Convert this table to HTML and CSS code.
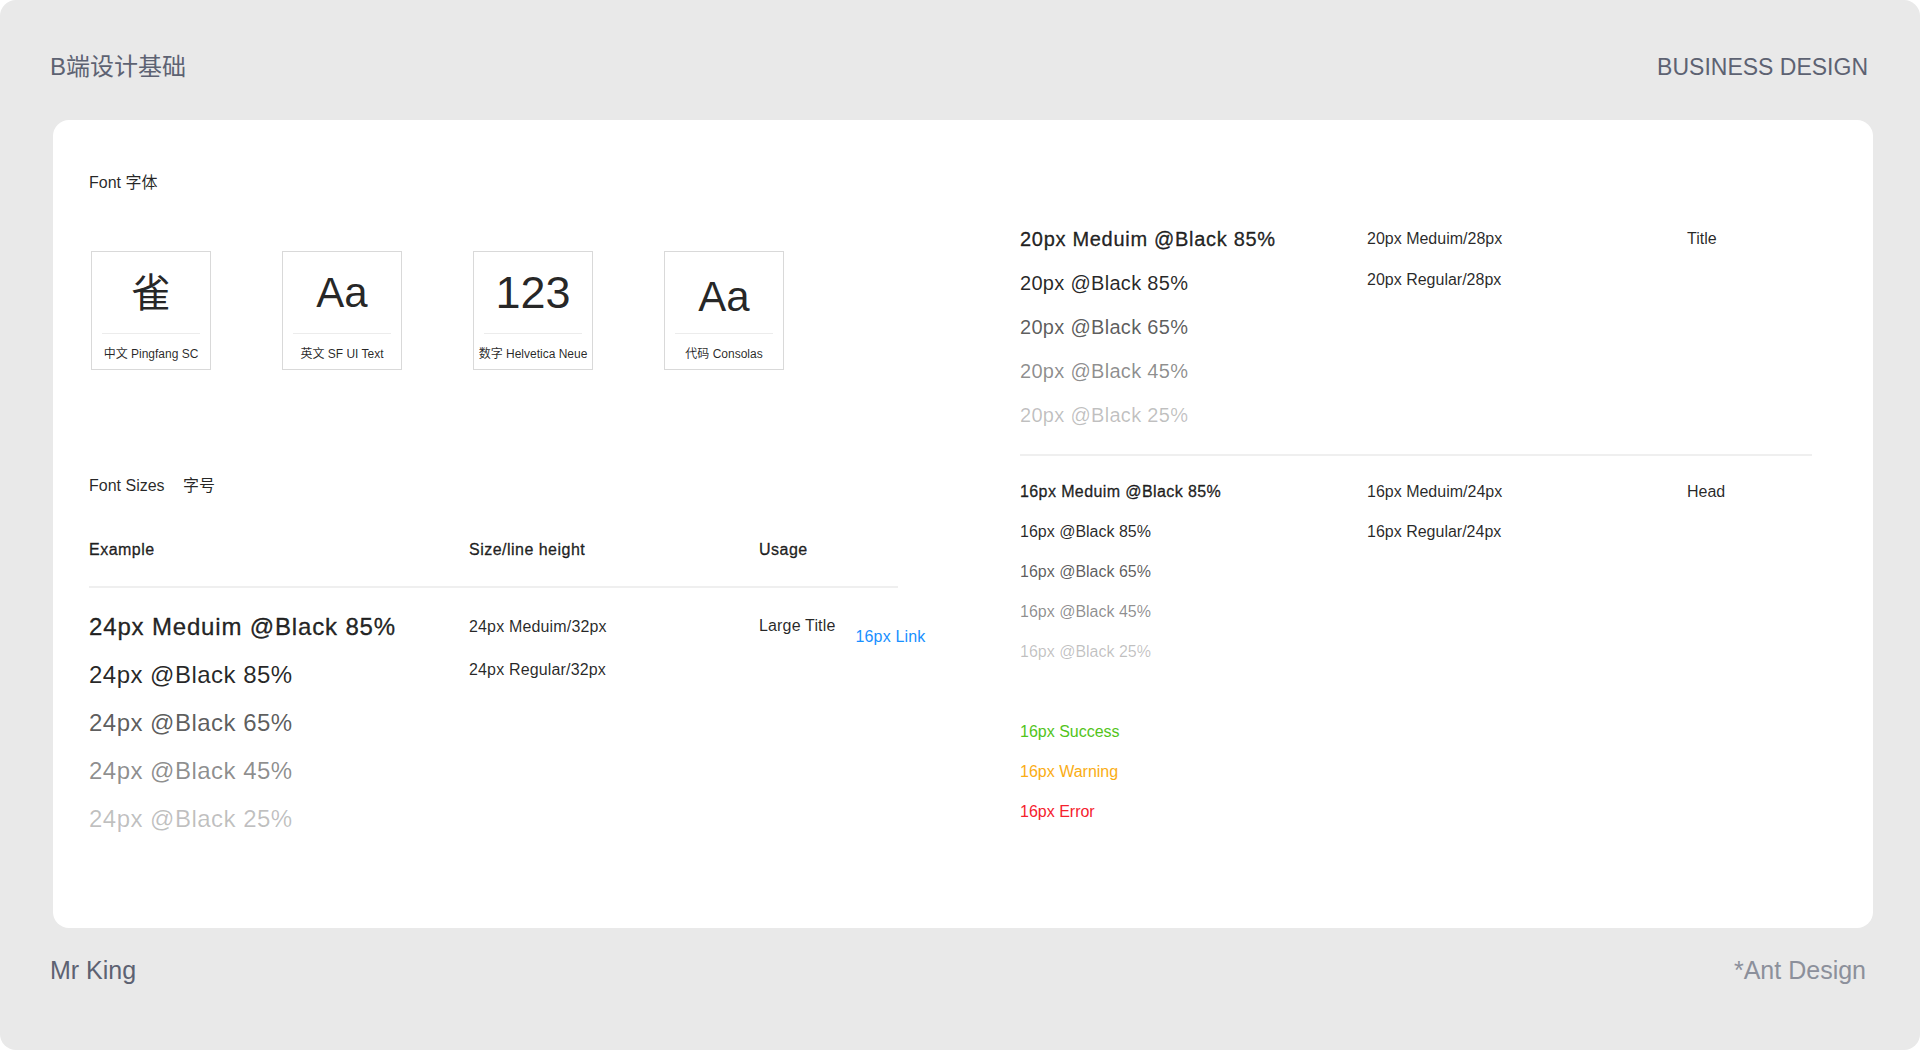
FILE: index.html
```html
<!DOCTYPE html>
<html lang="zh-CN">
<head>
<meta charset="utf-8">
<title>B端设计基础</title>
<link rel="stylesheet" href="styles.css">
</head>
<body>
<div class="frame">
  <header class="top">
    <div class="brand">B端设计基础</div>
    <div class="brand">BUSINESS DESIGN</div>
  </header>

  <main class="card">
    <section class="col-left">
      <h2 class="sec-title">Font 字体</h2>
      <div class="faces">
        <div class="face"><div class="glyph cjk">雀</div><div class="face-label">中文 Pingfang SC</div></div>
        <div class="face"><div class="glyph">Aa</div><div class="face-label">英文 SF UI Text</div></div>
        <div class="face"><div class="glyph num">123</div><div class="face-label">数字 Helvetica Neue</div></div>
        <div class="face"><div class="glyph low">Aa</div><div class="face-label">代码 Consolas</div></div>
      </div>

      <h2 class="sec-title sizes-title">Font Sizes <span class="cn">字号</span></h2>

      <div class="thead">
        <div class="c1 medium">Example</div>
        <div class="c2 medium">Size/line height</div>
        <div class="c3 medium">Usage</div>
      </div>
      <div class="rule wide"></div>

      <div class="rows24">
        <div class="r24">
          <div class="c1 medium k85">24px Meduim @Black 85%</div>
          <div class="c2 small">24px Meduim/32px</div>
          <div class="c3 small usage"><span>Large Title</span><span class="link">16px Link</span></div>
        </div>
        <div class="r24">
          <div class="c1 k85">24px @Black 85%</div>
          <div class="c2 small up">24px Regular/32px</div>
        </div>
        <div class="r24"><div class="c1 k65">24px @Black 65%</div></div>
        <div class="r24"><div class="c1 k45">24px @Black 45%</div></div>
        <div class="r24"><div class="c1 k25">24px @Black 25%</div></div>
      </div>
    </section>

    <section class="col-right">
      <div class="r20">
        <div class="d1 medium k85">20px Meduim @Black 85%</div>
        <div class="d2">20px Meduim/28px</div>
        <div class="d3">Title</div>
      </div>
      <div class="r20">
        <div class="d1 k85">20px @Black 85%</div>
        <div class="d2 up">20px Regular/28px</div>
      </div>
      <div class="r20"><div class="d1 k65">20px @Black 65%</div></div>
      <div class="r20"><div class="d1 k45">20px @Black 45%</div></div>
      <div class="r20"><div class="d1 k25">20px @Black 25%</div></div>

      <div class="rule right-rule"></div>

      <div class="r16">
        <div class="d1 medium k85">16px Meduim @Black 85%</div>
        <div class="d2">16px Meduim/24px</div>
        <div class="d3">Head</div>
      </div>
      <div class="r16">
        <div class="d1 k85">16px @Black 85%</div>
        <div class="d2">16px Regular/24px</div>
      </div>
      <div class="r16"><div class="d1 k65">16px @Black 65%</div></div>
      <div class="r16"><div class="d1 k45">16px @Black 45%</div></div>
      <div class="r16"><div class="d1 k25">16px @Black 25%</div></div>

      <div class="status">
        <div class="r16 success">16px Success</div>
        <div class="r16 warning">16px Warning</div>
        <div class="r16 error">16px Error</div>
      </div>
    </section>
  </main>

  <footer class="bottom">
    <div class="author">Mr King</div>
    <div class="credit">*Ant Design</div>
  </footer>
</div>
</body>
</html>
```

FILE: styles.css
```css
* { box-sizing: border-box; }

html, body {
  margin: 0;
  padding: 0;
  background: #ffffff;
}

body {
  font-family: "Liberation Sans", "Noto Sans CJK SC", sans-serif;
  color: rgba(0, 0, 0, 0.85);
}

.frame {
  width: 1920px;
  height: 1050px;
  background: #e9e9e9;
  border-radius: 16px;
  display: flex;
  flex-direction: column;
}

.top {
  height: 120px;
  padding: 14px 52px 0 50px;
  display: flex;
  align-items: center;
  justify-content: space-between;
}

.brand {
  font-size: 23px;
  color: #5d6272;
  line-height: 28px;
}

.top .brand:first-child { font-size: 24px; }

.card {
  margin: 0 47px 0 53px;
  height: 808px;
  background: #ffffff;
  border-radius: 16px;
  display: flex;
}

.bottom {
  flex: 1;
  padding: 28px 54px 0 50px;
  display: flex;
  justify-content: space-between;
  align-items: flex-start;
}

.author {
  font-size: 25px;
  line-height: 28px;
  color: #5d6272;
}

.credit {
  font-size: 25px;
  line-height: 28px;
  color: #8c909b;
}

.medium {
  -webkit-text-stroke: 0.35px currentColor;
  letter-spacing: 0.03em;
}

.k85 { color: rgba(0, 0, 0, 0.85); }
.k65 { color: rgba(0, 0, 0, 0.65); }
.k45 { color: rgba(0, 0, 0, 0.45); }
.k25 { color: rgba(0, 0, 0, 0.25); }

/* left column */
.col-left {
  width: 967px;
  flex: none;
  padding-left: 36px;
}

.sec-title {
  margin: 52px 0 0;
  font-size: 16px;
  line-height: 22px;
  font-weight: normal;
  color: rgba(0, 0, 0, 0.85);
}

.sizes-title { margin-top: 105px; }
.sizes-title .cn { margin-left: 14px; }

.faces {
  margin-top: 57px;
  margin-left: 2px;
  display: flex;
  gap: 71px;
}

.face {
  width: 120px;
  height: 119px;
  border: 1px solid #d9d9d9;
  display: flex;
  flex-direction: column;
  align-items: center;
}

.glyph {
  height: 82px;
  width: 98px;
  border-bottom: 1px solid #ececec;
  font-size: 42px;
  line-height: 82px;
  text-align: center;
  color: rgba(0, 0, 0, 0.85);
}

.glyph.cjk { font-size: 40px; }
.glyph.num { font-size: 45px; }
.glyph.low { line-height: 90px; }

.face-label {
  font-size: 12px;
  line-height: 40px;
  color: rgba(0, 0, 0, 0.85);
  white-space: nowrap;
}

.thead {
  margin-top: 42px;
  display: flex;
  font-size: 16px;
  line-height: 22px;
}

.c1 { width: 380px; flex: none; }
.c2 { width: 290px; flex: none; }
.c3 { flex: 1; }

.r24 .c1 { letter-spacing: 0.02em; }
.r24 .c1.medium { letter-spacing: 0.035em; }

.rule {
  height: 2px;
  background: #efefef;
}

.rule.wide {
  width: 809px;
  margin-top: 25px;
}

.rows24 { margin-top: 15px; }

.r24 {
  height: 48px;
  display: flex;
  align-items: center;
  font-size: 24px;
}

.small {
  font-size: 16px;
  color: rgba(0, 0, 0, 0.85);
  letter-spacing: 0.01em;
}

.up { position: relative; top: -5px; }

.usage {
  display: flex;
  align-items: flex-start;
  gap: 20px;
}

.link {
  color: #1890ff;
  margin-top: 20px;
  height: 0;
  line-height: 0;
}

/* right column */
.col-right {
  flex: 1;
  padding-top: 97px;
}

.r20 {
  height: 44px;
  display: flex;
  align-items: center;
  font-size: 20px;
}

.r20 .d1 { letter-spacing: 0.015em; }
.r20 .d1.medium { letter-spacing: 0.035em; }
.r16 .d1.medium { letter-spacing: 0.025em; }

.r16 {
  height: 40px;
  display: flex;
  align-items: center;
  font-size: 16px;
}

.d1 { width: 347px; flex: none; }
.d2 { width: 320px; flex: none; font-size: 16px; color: rgba(0, 0, 0, 0.85); }
.d3 { font-size: 16px; color: rgba(0, 0, 0, 0.85); }

.r20 .d2.up { top: -3px; }

.right-rule {
  width: 792px;
  margin: 17px 0 16px;
}

.status { margin-top: 40px; }

.success { color: #52c41a; }
.warning { color: #faad14; }
.error { color: #f5222d; }
```
